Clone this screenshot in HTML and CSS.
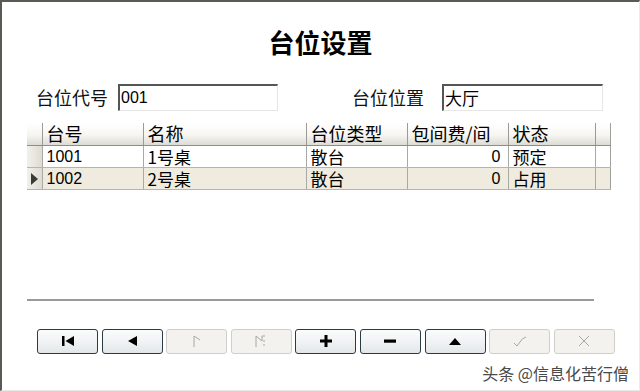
FILE: index.html
```html
<!DOCTYPE html>
<html>
<head>
<meta charset="utf-8">
<link rel="stylesheet" href="styles.css">
</head>
<body>
<div class="window">
  <h1 class="title">台位设置</h1>
  <div class="form-row">
    <label class="lbl lbl1">台位代号</label>
    <div class="input in1">001</div>
    <label class="lbl lbl2">台位位置</label>
    <div class="input in2">大厅</div>
  </div>
  <table class="grid">
    <colgroup>
      <col style="width:15px"><col style="width:101px"><col style="width:163px"><col style="width:101px"><col style="width:101px"><col style="width:87px"><col style="width:15px">
    </colgroup>
    <thead>
      <tr><th class="ind"></th><th>台号</th><th>名称</th><th>台位类型</th><th>包间费/间</th><th>状态</th><th class="ext"></th></tr>
    </thead>
    <tbody>
      <tr><td class="ind"></td><td>1001</td><td>1号桌</td><td>散台</td><td class="num">0</td><td>预定</td><td class="ext"></td></tr>
      <tr class="sel"><td class="ind"><span class="arrow"></span></td><td>1002</td><td>2号桌</td><td>散台</td><td class="num">0</td><td>占用</td><td class="ext"></td></tr>
    </tbody>
  </table>
  <div class="spacer"></div>
  <div class="rule"></div>
  <div class="buttons">
    <button class="btn"><svg width="14" height="12" viewBox="0 0 14 12"><rect x="1" y="1" width="2.5" height="10" fill="#000"/><path d="M13 1 L4.5 6 L13 11 Z" fill="#000"/></svg></button>
    <button class="btn"><svg width="12" height="12" viewBox="0 0 12 12"><path d="M11 1 L2 6 L11 11 Z" fill="#000"/></svg></button>
    <button class="btn dis"><svg width="14" height="14" viewBox="0 0 14 14"><path d="M4 13 V2 L10 6" fill="none" stroke="#a8a8a0" stroke-width="1"/></svg></button>
    <button class="btn dis"><svg width="16" height="14" viewBox="0 0 16 14"><path d="M3 13 V2 L9 7 V2 L12 2" fill="none" stroke="#a8a8a0" stroke-width="1"/><path d="M11 6 V8 M11 10 V12" stroke="#a8a8a0" stroke-width="1"/></svg></button>
    <button class="btn"><svg width="14" height="14" viewBox="0 0 14 14"><rect x="5.5" y="1" width="3" height="12" fill="#000"/><rect x="1" y="5.5" width="12" height="3" fill="#000"/></svg></button>
    <button class="btn"><svg width="14" height="14" viewBox="0 0 14 14"><rect x="1" y="5.5" width="12" height="3.2" fill="#000"/></svg></button>
    <button class="btn"><svg width="14" height="10" viewBox="0 0 14 10"><path d="M1 9 L7 2 L13 9 Z" fill="#000"/></svg></button>
    <button class="btn dis"><svg width="16" height="14" viewBox="0 0 16 14"><path d="M2 9 L5 12 L8 8 Q10 4 14 3" fill="none" stroke="#a8a8a0" stroke-width="1"/></svg></button>
    <button class="btn dis"><svg width="14" height="14" viewBox="0 0 14 14"><path d="M2 2 L12 12 M12 2 L7 7 L2 12" fill="none" stroke="#a8a8a0" stroke-width="1"/></svg></button>
  </div>
  <div class="watermark">头条 @信息化苦行僧</div>
</div>
</body>
</html>
```

FILE: styles.css
```css
* { box-sizing: border-box; }
html, body { margin: 0; padding: 0; background: #fff; }
body { font-family: "Liberation Sans", "Noto Sans CJK SC", sans-serif; color: #000; }

.window {
  width: 640px;
  height: 391px;
  border-top: 2px solid #5a5a55;
  border-left: 2px solid #5a5a55;
  border-right: 1px solid #ececec;
  border-bottom: 1px solid #e8e8e8;
  background: #fff;
  display: flex;
  flex-direction: column;
  position: relative;
}

.title {
  margin: 25px 0 0 0;
  text-align: center;
  font-family: "Noto Sans CJK SC", sans-serif;
  font-size: 26px;
  font-weight: bold;
  line-height: 30px;
  height: 30px;
}

.form-row {
  margin-top: 27px;
  display: flex;
  align-items: center;
  height: 27px;
}
.lbl {
  font-family: "Noto Sans CJK SC", sans-serif;
  font-size: 18px;
  line-height: 27px;
  color: #111;
}
.lbl1 { margin-left: 34px; width: 82px; }
.lbl2 { margin-left: 74px; width: 90px; }
.input {
  height: 27px;
  border-top: 2px solid #555;
  border-left: 2px solid #555;
  border-right: 1px solid #e6e6e6;
  border-bottom: 1px solid #e6e6e6;
  background: #fff;
  font-size: 16px;
  line-height: 24px;
  padding-left: 1px;
  font-family: "Liberation Sans", "Noto Sans CJK SC", sans-serif;
}
.in1 { width: 160px; }
.in2 { width: 161px; font-family: "Noto Sans CJK SC", sans-serif; font-size: 17px; line-height: 23px; }

.grid {
  margin-top: 12px;
  margin-left: 25px;
  width: 583px;
  table-layout: fixed;
  border-collapse: collapse;
  font-size: 16px;
}
.grid th {
  height: 22px;
  padding: 0 0 0 4px;
  text-align: left;
  font-weight: normal;
  font-family: "Noto Sans CJK SC", sans-serif;
  font-size: 18px;
  line-height: 21px;
  background: linear-gradient(#ffffff 0%, #f6f5f1 55%, #dddbd3 100%);
  border-left: 1px solid #9a9a96;
  border-bottom: 1px solid #8d8d8a;
  vertical-align: middle;
  white-space: nowrap;
}
.grid th.ind { border-left: none; padding: 0; }
.grid td {
  height: 22px;
  padding: 0 0 0 4px;
  border-left: 1px solid #a8a8a4;
  border-bottom: 1px solid #b4b4b0;
  line-height: 21px;
  white-space: nowrap;
  vertical-align: middle;
}
.grid td:nth-child(3), .grid td:nth-child(4), .grid td:nth-child(6) {
  font-family: "Noto Sans CJK SC", sans-serif;
  font-size: 17px;
}
.grid td.num { text-align: right; padding: 0 7px 0 0; }
.grid td.ind {
  border-left: none;
  padding: 0;
  background: linear-gradient(90deg, #f1f0eb, #dedbd3);
  position: relative;
}
.grid td.ext { padding: 0; border-right: 1px solid #a0a09c; }
.grid th.ext { border-right: 1px solid #a0a09c; }
.grid tr.sel td { background: #efebdf; }
.grid tr.sel td.ind { background: linear-gradient(90deg, #f1f0eb, #dedbd3); }
.arrow {
  position: absolute;
  left: 4px;
  top: 5px;
  width: 0;
  height: 0;
  border-top: 6px solid transparent;
  border-bottom: 6px solid transparent;
  border-left: 7px solid #3a3a36;
}

.spacer { height: 109px; }
.rule {
  margin-left: 25px;
  width: 567px;
  height: 2px;
  background: #9a9a9a;
}

.buttons {
  margin-top: 28px;
  margin-left: 35px;
  display: flex;
  gap: 3.6px;
}
.btn {
  width: 61px;
  height: 25px;
  padding: 0;
  border: 1.5px solid #2c3a44;
  border-radius: 3px;
  background: linear-gradient(#fbfcfc, #eef1f2 60%, #e2e6e8);
  display: flex;
  align-items: center;
  justify-content: center;
}
.btn.dis {
  border: 1px solid #cfcfca;
  background: #f3f2ee;
}

.watermark {
  position: absolute;
  right: 10px;
  top: 361px;
  font-family: "Noto Sans CJK SC", sans-serif;
  font-size: 16px;
  line-height: 20px;
  color: #4a4a4a;
  text-shadow: 1px 0 0 #fff, -1px 0 0 #fff, 0 1px 0 #fff, 0 -1px 0 #fff;
}
```
